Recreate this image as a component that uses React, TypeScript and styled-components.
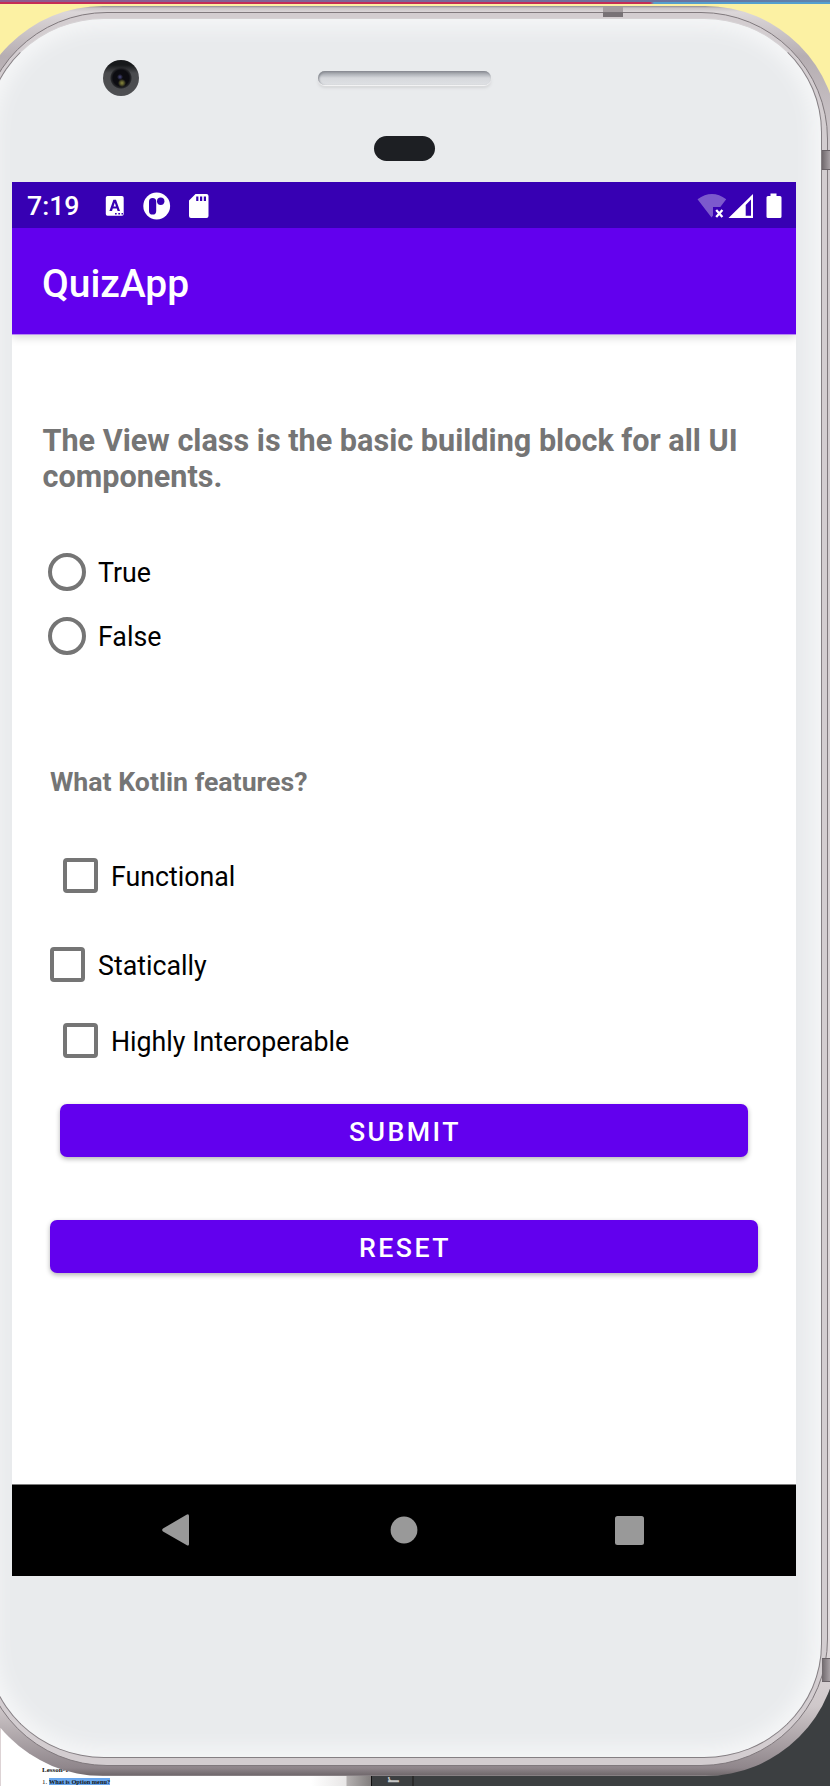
import React from "react";
import styled, { createGlobalStyle } from "styled-components";

const GlobalStyle = createGlobalStyle`
  * { box-sizing: border-box; }
  html, body { margin: 0; padding: 0; }
  body { font-family: Roboto, "Liberation Sans", sans-serif; overflow: hidden; }
`;

const Desktop = styled.div`
  position: relative;
  width: 830px;
  height: 1786px;
  overflow: hidden;
  display: flex;
  flex-direction: column;
`;

const TopStrip = styled.div`
  height: 2px;
  background: linear-gradient(90deg, #90598f, #68749f 85%, #5d86b0);
`;

const ProgressStrip = styled.div`
  height: 2px;
  background: linear-gradient(90deg, #c52d56 0 650px, #55a0cf 654px);
`;

const NoteArea = styled.div`
  flex: 1;
  background: #fcf1a3;
`;

const Windows = styled.div`
  height: 186px;
  display: flex;
`;

const DocWindow = styled.div`
  width: 371px;
  padding: 165px 0 0 41px;
  border-left: 1px solid #ddd3d5;
  background: linear-gradient(90deg, #fff 310px, #e8e6e6 345px, #b4b0b0 346px, #807c7c 371px);
  font: 7px/11px "Liberation Serif", serif;
  color: #111;
`;

const DocHeading = styled.div`
  font-weight: bold;
`;

const DocLine = styled.div`
  white-space: pre;
`;

const Highlight = styled.span`
  background: #69a7ee;
  font-weight: bold;
  font-size: 6.3px;
`;

const IdeWindow = styled.div`
  flex: 1;
  display: flex;
  align-items: flex-end;
  background: #3c3f41;
  border-left: 1px solid #111;
`;

const IdeTab = styled.div`
  width: 42px;
  height: 12px;
  border-right: 2px solid #2b2b2b;
  display: flex;
  align-items: center;
  justify-content: center;
  color: #c5c5c5;
  font-size: 20px;
  line-height: 12px;
`;

const Rotated = styled.span`
  transform: rotate(-90deg);
`;

const Rim = styled.div`
  position: absolute;
  left: -30px;
  top: 6px;
  width: 868px;
  height: 1770px;
  padding: 6px 10px 10px;
  border-radius: 133px;
  background: linear-gradient(180deg, #8f8a8e 0, #c9c3c6 2px, #dcd7d9 6px, #b6aeb2 50px, #cfc9cc 140px, #e2dcde 1630px, #cfc8ca 1700px, #8f868b 1762px, #71696d 1769px, #9c9699 1770px);
`;

const Band = styled.div`
  width: 848px;
  height: 1754px;
  padding: 5px;
  border: 1px solid #80797d;
  border-radius: 127px;
  background: #d3cdd0;
`;

const Face = styled.div`
  width: 836px;
  height: 1740px;
  padding: 163px 26px 0 25px;
  border-radius: 118px / 114px;
  border: 1px solid #857f83;
  border-top-color: #d6d2d4;
  background: #e9ebed;
  box-shadow: inset 0 0 18px 9px #f5f6f7;
`;

const AntennaTop = styled.div`
  position: absolute;
  left: 633px;
  top: 1px;
  width: 20px;
  height: 10px;
  background: linear-gradient(#a49da0 50%, #787276 50%);
`;

const AntennaSide = styled.div<{ $top: number; $height: number }>`
  position: absolute;
  left: 852px;
  top: ${(p) => p.$top}px;
  width: 16px;
  height: ${(p) => p.$height}px;
  border-top: 1px solid #696267;
  border-bottom: 1px solid #696267;
  background: linear-gradient(90deg, #6f686c, #a8a1a5 8px);
`;

const Camera = styled.div`
  position: absolute;
  left: 133px;
  top: 54px;
  width: 36px;
  height: 36px;
  border-radius: 50%;
  background:
    radial-gradient(circle at 19px 23px, #8b8a40 0, #55552a 2px, transparent 4px),
    radial-gradient(circle at 17px 17px, #4a4a80 0, transparent 3px),
    radial-gradient(circle at 18px 18px, #0c0c11 8px, #26272a 10px, transparent 11px),
    linear-gradient(#17191b 5px, #4a4b4e 13px, #4e4f52);
`;

const Speaker = styled.div`
  position: absolute;
  left: 348px;
  top: 65px;
  width: 173px;
  height: 14px;
  border-radius: 7px;
  background: linear-gradient(#92959c 0, #b7bac0 4px, #d6d8dc 7px, #dfe1e4 14px);
  box-shadow: inset 1px 1px 2px #878a91, 0 1px 1px #f7f7f8, 0 3px 3px #d3d4d6;
`;

const Sensor = styled.div`
  position: absolute;
  left: 403.500px;
  top: 130px;
  width: 61.500px;
  height: 25px;
  border-radius: 13px;
  background: #1d1f23;
`;

const Screen = styled.main`
  width: 784px;
  height: 1394px;
  overflow: hidden;
  background: #fff;
  display: flex;
  flex-direction: column;
`;

const StatusBar = styled.div`
  position: relative;
  z-index: 1;
  height: 46px;
  padding: 1px 13px 0 15px;
  display: flex;
  align-items: center;
  background: #3700b3;
  color: #fff;
`;

const Clock = styled.span`
  width: 78px;
  padding-top: 1px;
  font-size: 26.7px;
  font-weight: 500;
  line-height: 44px;
`;

const Spacer = styled.div`
  flex: 1;
`;

const AppBar = styled.header`
  height: 106px;
  padding: 4px 30px 0;
  display: flex;
  align-items: center;
  background: #6200ee;
  color: #fff;
  font-size: 38.900px;
  font-weight: 500;
  box-shadow: 0 1px 0 #b78af0, 0 3px 9px rgba(0, 0, 0, 0.18);
`;

const Content = styled.section`
  flex: 1;
  padding: 89px 0 0 30.500px;
  display: flex;
  flex-direction: column;
  align-items: flex-start;
`;

const Question = styled.h2<{ $size: number; $indent?: number; $before?: number }>`
  margin: ${(p) => p.$before ?? 0}px 0 0 ${(p) => p.$indent ?? 0}px;
  white-space: pre-line;
  color: #757575;
  font-size: ${(p) => p.$size}px;
  line-height: 36px;
  font-weight: 700;
`;

const Option = styled.label<{ $indent: number; $before: number; $gap: number }>`
  display: flex;
  align-items: center;
  gap: ${(p) => p.$gap}px;
  height: 38px;
  margin: ${(p) => p.$before}px 0 0 ${(p) => p.$indent}px;
  font-size: 26.75px;
  line-height: 38px;
  color: #000;
`;

const Radio = styled.span`
  width: 38px;
  height: 38px;
  border: 4px solid #757575;
  border-radius: 50%;
`;

const Checkbox = styled.span`
  width: 35px;
  height: 35px;
  margin-bottom: 2px;
  border: 4px solid #757575;
  border-radius: 4px;
`;

const OptionText = styled.span`
  padding-top: 2px;
`;

const Button = styled.button<{ $before: number; $indent: number; $width: number }>`
  width: ${(p) => p.$width}px;
  height: 53px;
  margin: ${(p) => p.$before}px 0 0 ${(p) => p.$indent}px;
  padding: 2px 0 0 2px;
  border: 0;
  border-radius: 7px;
  background: #6200ee;
  color: #fff;
  font: 500 26.7px/50px Roboto, sans-serif;
  letter-spacing: 2.45px;
  box-shadow: 0 2px 5px rgba(0, 0, 0, 0.3);
`;

const NavBar = styled.nav`
  height: 92px;
  padding: 0 152px 1px 150px;
  display: flex;
  align-items: center;
  justify-content: space-between;
  background: #000;
  border-top: 1px solid #7c7c7c;
`;

const NotificationIcons = () => (
  <svg width="110" height="30" viewBox="0 0 110 30" fill="#fff">
    <path fillRule="evenodd" d="M2.5 5H17a1.7 1.7 0 0 1 1.7 1.7V23a1.7 1.7 0 0 1-1.7 1.7H2.5A1.7 1.7 0 0 1 .8 23V6.700A1.7 1.7 0 0 1 2.5 5Zm5.900 3.800-4 11.200H7l.8-2.400h4l.8 2.400h2.400L11 8.800Zm1.400 3 1.200 3.700H8.500ZM10 22v1.500h1.700V22Zm3.300 0v1.500H15V22Zm3.200 0v1.500h1.500V22Z" />
    <circle cx="51.700" cy="15" r="13.400" />
    <rect x="44" y="7" width="7.200" height="16.500" rx="3.600" fill="#3700b3" />
    <circle cx="55.700" cy="10.200" r="3.700" fill="#3700b3" />
    <path fillRule="evenodd" d="M90.500 3H101.500a2 2 0 0 1 2 2V25a2 2 0 0 1-2 2H86a2 2 0 0 1-2-2V9.500ZM91.200 5.500V10h2.200V5.500Zm3.800 0V10h2.200V5.500Zm3.800 0V10h2.200V5.500Z" />
  </svg>
);

const SystemIcons = () => (
  <svg width="86" height="30" viewBox="0 0 86 30" fill="#fff">
    <path d="M.5 8.300Q15 -2.200 29.200 8.300L23.300 16H16V24.500L14.500 26.500Z" opacity=".35" />
    <path d="m19.200 19 6.200 7m0-7-6.200 7" stroke="#fff" strokeWidth="2.300" />
    <path fillRule="evenodd" d="M56 3V27H31.500ZM48.700 14V24.800H54V8.600Z" />
    <path d="M73.500 2.500h6V5H83a1.500 1.500 0 0 1 1.500 1.500V25.500A1.500 1.500 0 0 1 83 27H71a1.500 1.500 0 0 1-1.500-1.500V6.500A1.500 1.500 0 0 1 71 5h2.500Z" />
  </svg>
);

const BackIcon = () => (
  <svg width="27" height="32" viewBox="0 0 27 32" fill="#999">
    <path d="M24.500.8Q27-.5 27 2V30Q27 32.500 24.500 31L1 17.500Q-.7 16 1 14.500Z" />
  </svg>
);

const HomeIcon = () => (
  <svg width="31" height="28" viewBox="-3 0 31 28" fill="#999">
    <circle cx="14" cy="14" r="13.400" />
  </svg>
);

const RecentIcon = () => (
  <svg width="29" height="29" viewBox="0 0 29 29" fill="#999">
    <rect width="29" height="29" rx="2.500" />
  </svg>
);

export default function App() {
  return (
    <Desktop>
      <GlobalStyle />
      <TopStrip />
      <ProgressStrip />
      <NoteArea />
      <Windows>
        <DocWindow>
          <DocHeading>Lesson-1</DocHeading>
          <DocLine>
            1. <Highlight>What is Option menu?</Highlight>
          </DocLine>
        </DocWindow>
        <IdeWindow>
          <IdeTab>
            <Rotated>r</Rotated>
          </IdeTab>
        </IdeWindow>
      </Windows>
      <Rim>
        <Band>
          <Face>
            <Screen>
              <StatusBar>
                <Clock>7:19</Clock>
                <NotificationIcons />
                <Spacer />
                <SystemIcons />
              </StatusBar>
              <AppBar>QuizApp</AppBar>
              <Content>
                <Question $size={30.6}>
                  {"The View class is the basic building block for all UI\ncomponents."}
                </Question>
                <Option $before={58} $indent={5.5} $gap={12}>
                  <Radio />
                  <OptionText>True</OptionText>
                </Option>
                <Option $before={26} $indent={5.5} $gap={12}>
                  <Radio />
                  <OptionText>False</OptionText>
                </Option>
                <Question $size={26.7} $indent={7.5} $before={109}>
                  What Kotlin features?
                </Question>
                <Option $before={57} $indent={20.5} $gap={13}>
                  <Checkbox />
                  <OptionText>Functional</OptionText>
                </Option>
                <Option $before={51} $indent={7.5} $gap={13}>
                  <Checkbox />
                  <OptionText>Statically</OptionText>
                </Option>
                <Option $before={38} $indent={20.5} $gap={13}>
                  <Checkbox />
                  <OptionText>Highly Interoperable</OptionText>
                </Option>
                <Button $before={44} $indent={17.5} $width={688}>
                  SUBMIT
                </Button>
                <Button $before={63} $indent={7.5} $width={708}>
                  RESET
                </Button>
              </Content>
              <NavBar>
                <BackIcon />
                <HomeIcon />
                <RecentIcon />
              </NavBar>
            </Screen>
          </Face>
        </Band>
        <AntennaTop />
        <AntennaSide $top={144} $height={20} />
        <AntennaSide $top={1652} $height={24} />
        <Camera />
        <Speaker />
        <Sensor />
      </Rim>
    </Desktop>
  );
}
